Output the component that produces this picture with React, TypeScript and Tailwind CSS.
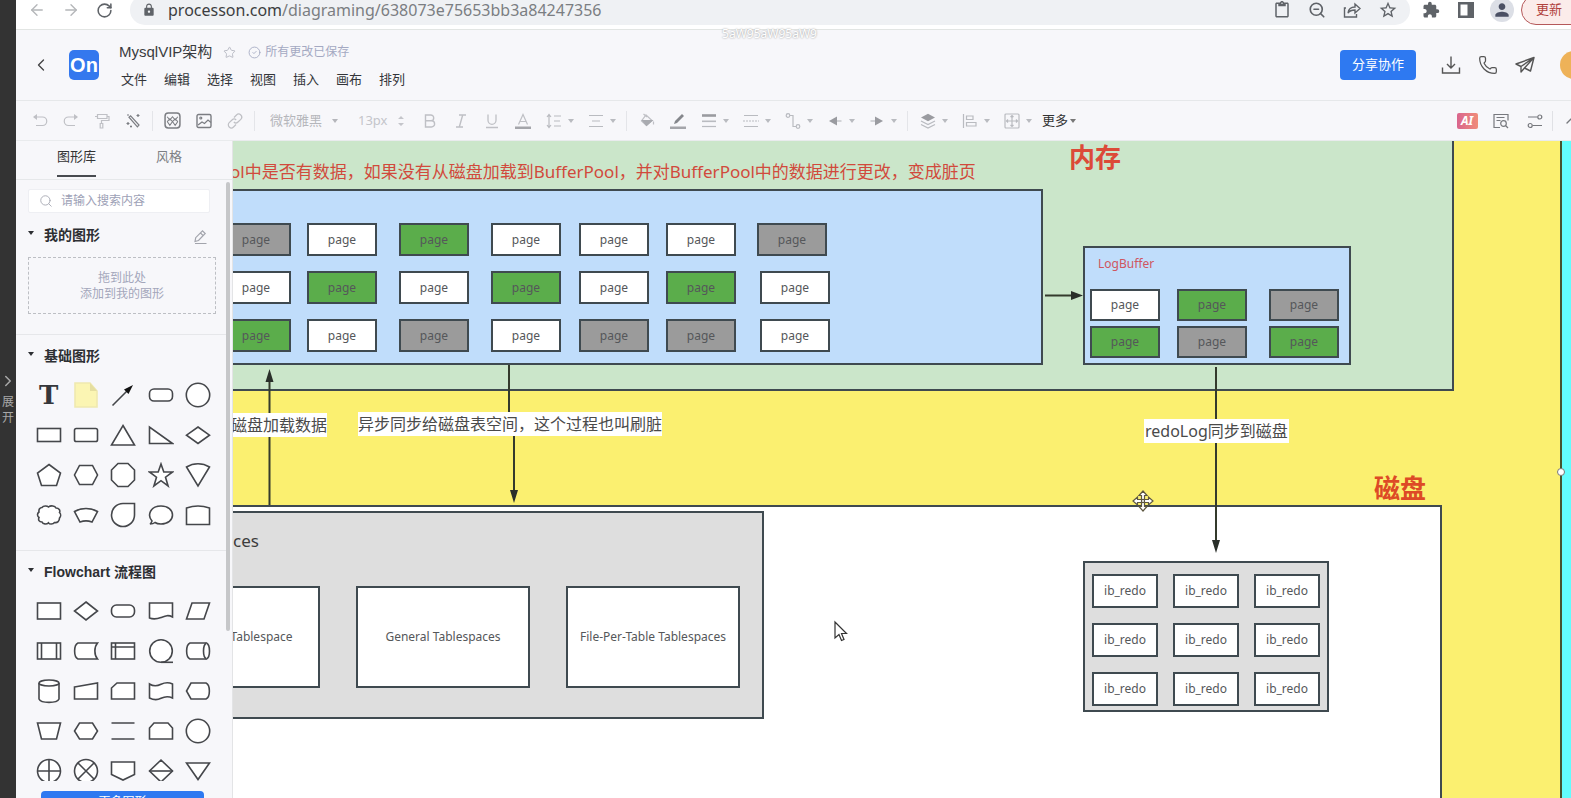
import type { ReactNode } from "react";
import { ArrowLeft, ArrowRight, RotateCw, ChevronLeft, ChevronRight, ChevronUp, Star, CircleCheck, Phone, Search, ZoomOut } from "lucide-react";
import { MdLock, MdContentPaste, MdStarOutline, MdExtension, MdPerson } from "react-icons/md";

/* ---------- shared drawing helpers ---------- */

function Glyph({ children, size = "size-4" }: { children: ReactNode; size?: string }) {
  return (
    <svg viewBox="0 0 16 16" className={size} fill="none" stroke="currentColor" strokeWidth="1.2" aria-hidden="true">
      {children}
    </svg>
  );
}

function Caret({ className = "" }: { className?: string }) {
  return (
    <svg viewBox="0 0 6 4" className={`h-1 w-1.5 shrink-0 ${className}`} fill="currentColor" aria-hidden="true">
      <path d="M0 0h6L3 4z" />
    </svg>
  );
}

/* ---------- browser bar ---------- */

function BrowserBar() {
  return (
    <div className="flex h-[30px] shrink-0 items-end overflow-hidden border-b border-[#e2e5e3] bg-white pb-1 text-[#5f6368]">
      <div className="flex h-[30px] items-center">
        <button aria-label="后退" className="ml-3 mr-4 text-[#b4b6b9]"><ArrowLeft size={18} strokeWidth={1.8} /></button>
        <button aria-label="前进" className="mr-4 text-[#b4b6b9]"><ArrowRight size={18} strokeWidth={1.8} /></button>
        <button aria-label="刷新" className="mr-[17px]"><RotateCw size={17} strokeWidth={2.2} /></button>
      </div>
      <div className="flex h-[30px] min-w-0 flex-1 items-center rounded-full bg-[#eff1f4] pl-3">
        <MdLock size={14} className="shrink-0" />
        <div className="ml-3 flex-1 truncate text-base text-[#7b7e82]">
          <span className="text-[#3c3e41]">processon.com</span>/diagraming/638073e75653bb3a84247356
        </div>
        <div className="flex items-center gap-[17px] pr-3">
          <MdContentPaste size={18} />
          <ZoomOut size={18} strokeWidth={2.2} />
          <svg viewBox="0 0 18 18" className="size-[18px]" fill="none" stroke="currentColor" strokeWidth="1.4" aria-hidden="true">
            <path d="M3 7H1.500v9h12v-3" />
            <path d="M5 12c.5-4 3-6 7-6V3l5 4.500-5 4.500V9c-3 0-5.500.8-7 3z" />
          </svg>
          <MdStarOutline size={20} />
        </div>
      </div>
      <div className="flex h-[30px] items-center">
        <MdExtension size={18} className="ml-3 mr-[18px]" />
        <svg viewBox="0 0 16 16" className="mr-4 size-4" aria-hidden="true">
          <path d="M0 0h16v16H0zM2.500 2.500v11h7v-11z" fill="currentColor" fillRule="evenodd" />
        </svg>
        <span className="mr-[7px] flex size-6 items-center justify-center rounded-full bg-[#dcdfe6] text-[#4a5064]"><MdPerson size={20} /></span>
        <div className="w-[50px]">
          <button className="h-[30px] w-[90px] rounded-full border border-[#b5595a] bg-[#fbecea] pl-3.5 text-left text-[13px] text-[#b0413c]">更新</button>
        </div>
      </div>
    </div>
  );
}

/* ---------- document header ---------- */

const menus = ["文件", "编辑", "选择", "视图", "插入", "画布", "排列"];

function Header() {
  return (
    <header className="flex h-[71px] shrink-0 items-center overflow-hidden border-b border-[#e6e8ea] pl-[15px]">
      <button aria-label="返回" className="text-[#444]"><ChevronLeft size={20} strokeWidth={1.6} /></button>
      <div className="ml-[18px] flex size-[30px] items-center justify-center rounded-[5px] bg-[#3478ee] font-[Arial,'Liberation_Sans',sans-serif] text-xl font-bold text-white">On</div>
      <div className="ml-5 flex flex-col gap-1 pt-0.5">
        <div className="flex h-6 items-center">
          <h1 className="font-['Liberation_Sans','Noto_Sans_CJK_SC',sans-serif] text-[15px] text-[#3a3c40]">MysqlVIP架构</h1>
          <button aria-label="收藏" className="ml-[11px] text-[#b9bbc4]"><Star size={13} strokeWidth={1.8} /></button>
          <span className="ml-3 flex items-center gap-1 text-xs text-[#a4a9c2]">
            <CircleCheck size={13} strokeWidth={1.6} />所有更改已保存
          </span>
        </div>
        <nav className="flex h-6 items-center gap-[17px] pl-0.5">
          {menus.map((m) => (
            <button key={m} className="text-[13px] text-[#333539]">{m}</button>
          ))}
        </nav>
      </div>
      <button className="ml-auto h-[30px] w-[76px] shrink-0 rounded bg-[#2e79f1] text-[13px] text-white">分享协作</button>
      <div className="ml-4 flex text-[#555]">
        <button aria-label="下载" className="flex w-[37px] justify-center">
          <svg viewBox="0 0 20 20" className="size-5" fill="none" stroke="currentColor" strokeWidth="1.4" aria-hidden="true">
            <path d="M10 1.500v11M6 9l4 4 4-4M1.500 12.500V18h17v-5.500" />
          </svg>
        </button>
        <button aria-label="电话" className="flex w-[37px] justify-center"><Phone size={20} strokeWidth={1.5} /></button>
        <button aria-label="发送" className="flex w-[37px] justify-center">
          <svg viewBox="0 0 20 20" className="size-5" fill="none" stroke="currentColor" strokeWidth="1.4" strokeLinejoin="round" aria-hidden="true">
            <path d="M19 2.500 1 9l5 2.500L19 2.500 15.500 16l-6-3L19 2.500M6 11.500V17l3.500-4" />
          </svg>
        </button>
      </div>
      <div className="ml-[17px] w-[11px] shrink-0">
        <div className="size-7 rounded-full bg-[#eeb258]" />
      </div>
    </header>
  );
}

/* ---------- toolbar ---------- */

function Tool({ label, children, dark = false }: { label: string; children: ReactNode; dark?: boolean }) {
  return (
    <button aria-label={label} className={`flex w-[31px] shrink-0 items-center justify-center ${dark ? "text-[#7b7d82]" : "text-[#bfc0c5]"}`}>
      {children}
    </button>
  );
}

function DropTool({ label, children }: { label: string; children: ReactNode }) {
  return (
    <button aria-label={label} className="flex w-[42px] shrink-0 items-center gap-[6px] pl-2 text-[#b9bbc0]">
      {children}
      <Caret />
    </button>
  );
}

const Divider = () => <span className="mx-1 h-5 w-px shrink-0 bg-[#e4e5e9]" />;

function Toolbar() {
  return (
    <div className="flex h-10 shrink-0 items-center overflow-hidden border-b border-[#e9ebed] pl-2" role="toolbar">
      <Tool label="撤销"><Glyph><path d="M2 4h8.500a4 4 0 0 1 0 8.500H4" /><path d="M5 1 1 4l4 3z" fill="currentColor" stroke="none" /></Glyph></Tool>
      <Tool label="重做"><Glyph><path d="M14 4H5.500a4 4 0 0 0 0 8.500H12" /><path d="m11 1 4 3-4 3z" fill="currentColor" stroke="none" /></Glyph></Tool>
      <Tool label="格式刷"><Glyph><path d="M3.500 1.500h9.500v4H3.500zM13 3.500h2v4H7.500v3M6.200 10.500h2.600V15H6.200zM3.500 3.500H1" /></Glyph></Tool>
      <Tool label="美化" dark><Glyph><path d="m4 4.200 1.600-1.400L14 12l-1.600 1.800z" /><path d="M13 1v3M11.500 2.500h3M2 2h2M3 9v3M1.500 10.500h3M6 12.500v2M5 13.500h2" /></Glyph></Tool>
      <Divider />
      <Tool label="图形" dark>
        <Glyph size="size-[17px]"><rect x="1" y="1" width="14" height="14" rx="3" strokeWidth="1.400" /><path d="m3 4.500 2.500 3L8 4.500l2.500 3L13 4.500M3 9l2.500-2.500L8 9l2.500-2.500L13 9M3 9l2.500 3.500L8 9l2.500 3.500L13 9" strokeWidth="1" /></Glyph>
      </Tool>
      <Tool label="图片" dark><Glyph><rect x="1" y="1.500" width="14" height="13" rx="1.500" strokeWidth="1.400" /><circle cx="4.800" cy="5" r="1" /><path d="m2 12 4-3 2.500 1.500L12 7l3 2.500" /></Glyph></Tool>
      <Tool label="链接"><Glyph><path d="m7 4.500 2.500-2.500a3 3 0 0 1 4.300 4.300L11 9a3 3 0 0 1-4.200 0M9 11.500 6.500 14a3 3 0 0 1-4.300-4.300L5 7a3 3 0 0 1 4.200 0" /></Glyph></Tool>
      <Divider />
      <div className="flex w-[90px] shrink-0 items-center pl-[11px] text-[#b5b6bb]">
        <select aria-label="字体" className="w-[62px] appearance-none bg-transparent text-[13px] outline-none"><option>微软雅黑</option></select>
        <Caret />
      </div>
      <div className="flex w-[65px] shrink-0 items-center pl-[9px] text-[#c4c5ca]">
        <input aria-label="字号" defaultValue="13px" className="w-10 bg-transparent text-[13px] outline-none" />
        <svg viewBox="0 0 6 12" className="h-3 w-1.5" fill="currentColor" aria-hidden="true"><path d="M0 4h6L3 1zM0 8h6l-3 3z" /></svg>
      </div>
      <Tool label="加粗"><Glyph><path d="M3.500 2h5.300a2.900 2.900 0 0 1 0 5.800H3.500zM3.500 7.800h6a3.100 3.100 0 0 1 0 6.200h-6z" strokeWidth="1.400" /></Glyph></Tool>
      <Tool label="斜体"><Glyph><path d="M6 2h7M3 14h7M9.700 2l-3.400 12" strokeWidth="1.400" /></Glyph></Tool>
      <Tool label="下划线"><Glyph><path d="M4 1.500v5.800a4 4 0 0 0 8 0V1.500M2 14.500h12" strokeWidth="1.300" /></Glyph></Tool>
      <Tool label="文字颜色"><Glyph><path d="M3.500 11.500 8 1.500l4.500 10M5 8.500h6" /><path d="M0 13.500h16V16H0z" fill="#a4a5aa" stroke="none" /></Glyph></Tool>
      <DropTool label="行距"><Glyph><path d="M3 2v12M1 4l2-2.500L5 4M1 12l2 2.500L5 12M8 3h7M8 8h6M8 13h7" /></Glyph></DropTool>
      <DropTool label="对齐"><Glyph><path d="M1 2.500h14M4 8h8M1 13.500h14" /></Glyph></DropTool>
      <Divider />
      <Tool label="填充"><Glyph><path d="m7 2 6 5.500-5.500 5-5-4.500z" /><path d="M3.500 7.500H13l-5.500 5z" fill="#a9abb0" stroke="#a9abb0" /><path d="M14.500 8.500v3M4.500 1 8 4" /></Glyph></Tool>
      <Tool label="线条颜色"><Glyph><path d="m4 11 1-3L12 1l2 2-7 7z" fill="#85878c" stroke="none" /><path d="M0 13.500h16V16H0z" fill="#a4a5aa" stroke="none" /></Glyph></Tool>
      <DropTool label="线宽"><Glyph><path d="M1 2.500h14" strokeWidth="2.600" stroke="#9a9ba0" /><path d="M1 8.300h14" strokeWidth="1.600" /><path d="M1 13.500h14" /></Glyph></DropTool>
      <DropTool label="线型"><Glyph><path d="M1 2.500h14M1 13.500h14" /><path d="M0 8h16" strokeDasharray="2 1" /></Glyph></DropTool>
      <DropTool label="连线类型"><Glyph><circle cx="3" cy="2.500" r="1.800" /><circle cx="13" cy="13.500" r="1.800" /><path d="M4.800 2.500H8v11h3.200" /></Glyph></DropTool>
      <DropTool label="起点"><Glyph><path d="M10 3.500v9L2 8z" fill="#9a9ba0" stroke="none" /><path d="M10 8h4.500" /></Glyph></DropTool>
      <DropTool label="终点"><Glyph><path d="M6 3.500v9L14 8z" fill="#9a9ba0" stroke="none" /><path d="M1.500 8H6" /></Glyph></DropTool>
      <Divider />
      <DropTool label="图层"><Glyph><path d="m8 .8 7 3.700-7 3.700-7-3.700z" fill="#9a9ba0" stroke="none" /><path d="m1 8 7 3.500L15 8M1 11.500 8 15l7-3.500" /></Glyph></DropTool>
      <DropTool label="排列对齐"><Glyph><path d="M1.500 1v14M4.500 3h6.500v3.500H4.500zM4.500 9.500H14V13H4.500z" /></Glyph></DropTool>
      <DropTool label="分布"><Glyph><rect x="1" y="1" width="14" height="14" rx="1" /><path d="M8 2.500v11M2.500 8h11M6.500 4 8 2.500 9.500 4M6.500 12 8 13.500 9.500 12M4 6.500 2.500 8 4 9.500M12 6.500 13.500 8 12 9.500" /></Glyph></DropTool>
      <button className="flex shrink-0 items-center gap-0.5 pl-1 text-[13px] text-[#333]">更多<Caret className="text-[#777]" /></button>

      <div className="ml-auto flex shrink-0 items-center text-[#77797e]">
        <button className="flex w-[34px] justify-center">
          <span className="flex h-4 w-[21px] items-center justify-center rounded-xs bg-linear-to-r from-[#d9658d] to-[#f08c78] text-xs font-bold italic text-white">AI</span>
        </button>
        <button aria-label="查找" className="flex w-[34px] justify-center">
          <Glyph><path d="M7 14.500H1v-13h14v6M3.500 4.500h8M3.500 7.500h4" /><circle cx="10.500" cy="10.500" r="2.800" /><path d="m12.500 12.500 2.500 2.500" /></Glyph>
        </button>
        <button aria-label="设置" className="flex w-[34px] justify-center">
          <Glyph><path d="M1 4h9.500M5.500 12.500H15" /><circle cx="12.800" cy="4" r="2" /><circle cx="3.200" cy="12.500" r="2" /></Glyph>
        </button>
        <span className="h-5 w-px bg-[#e0e1e5]" />
        <button aria-label="收起" className="w-[18px] pl-2.5"><ChevronUp size={16} /></button>
      </div>
    </div>
  );
}

/* ---------- shape library ---------- */

const basicShapes: { name: string; art: ReactNode }[] = [
  { name: "便签", art: <><path d="M2 1h15l7 8v16H2z" fill="#fbf5b3" stroke="#efe9b0" /><path d="M17 1v8h7z" fill="#e5dea0" stroke="none" /></> },
  { name: "箭头", art: <><path d="M2.500 23.500 17 9" /><path d="m23 3-4.500 9-4.500-4.500z" fill="#111" stroke="none" /></> },
  { name: "圆角矩形", art: <rect x="1.500" y="7" width="23" height="12" rx="4.500" /> },
  { name: "圆形", art: <circle cx="13" cy="13" r="11.700" /> },
  { name: "矩形", art: <rect x="1.500" y="6.500" width="23" height="13" /> },
  { name: "小圆角矩形", art: <rect x="1.500" y="6.500" width="23" height="13" rx="1.800" /> },
  { name: "三角形", art: <path d="M13 3.500 24.500 23h-23z" /> },
  { name: "直角三角形", art: <path d="M1.500 5v16.500h23z" /> },
  { name: "菱形", art: <path d="m13 5 11.500 8.200L13 21.500 1.500 13.200z" /> },
  { name: "五边形", art: <path d="M13 2.500 24.500 11l-4 12.500h-15L1.500 11z" /> },
  { name: "六边形", art: <path d="M6.500 3.500h13L24.500 13l-5 9.500h-13L1.500 13z" /> },
  { name: "八边形", art: <path d="M8 1.500h10L24.500 8v10L18 24.500H8L1.500 18V8z" /> },
  { name: "五角星", art: <path d="m13 2 2.800 8h8.700l-7 5.200 2.600 8.800-7.100-5.300L5.900 24l2.600-8.800L1.500 10h8.700z" /> },
  { name: "扇形", art: <path d="M1.500 5c7-4.300 16-4.300 23 0L13 24z" /> },
  { name: "云", art: <path d="M6 5.500C7.500 3.500 11 3.500 12.500 5 15 3 19 4 20 6c3 0 4.500 2.500 3.500 4.500 1.500 1.500 1.500 4 0 5.500 0 3-2 5-5 4.500-1.500 2-5 2-6 .3-2 1.700-5.500 1.500-6.500-.8-3 0-4-2-3-4.500-2-1.500-2-4 0-5.500C2.500 7.500 4 5.500 6 5.500z" /> },
  { name: "弧带", art: <path d="M1.500 9.500c7-4 16-4 23 0L19 20c-4-1.500-8-1.500-12 0z" /> },
  { name: "水滴", art: <path d="M24.500 1.500V13A11.500 11.500 0 1 1 13 1.500z" /> },
  { name: "对话", art: <path d="M2 22c1-.5 1.500-1.500 2-3C-1 13.500 2 4 13 4c7 0 11.500 4 11.500 9S20 22 13 22c-2.500 0-4.500-.4-6-1.500-1.500 1.200-3.500 1.500-5 1.500z" /> },
  { name: "拱门", art: <path d="M1.500 22.500V6c7-2.500 16-2.500 23 0v16.500z" /> },
];

const flowShapes: { name: string; art: ReactNode }[] = [
  { name: "流程", art: <rect x="1.500" y="5" width="23" height="16" /> },
  { name: "判定", art: <path d="m13 4 11.500 9L13 22 1.500 13z" /> },
  { name: "开始结束", art: <rect x="1.500" y="7" width="23" height="12" rx="5" /> },
  { name: "文档", art: <path d="M1.500 5h23v14c-4.500-2.500-7.500-1-11.500.5s-8 1.800-11.500.5z" /> },
  { name: "数据", art: <path d="M7 5h17.500L19 21H1.500z" /> },
  { name: "子流程", art: <><rect x="1.500" y="5" width="23" height="16" /><path d="M5.500 5v16M20.500 5v16" /></> },
  { name: "外部数据", art: <path d="M24.500 5H5C.5 7 .5 19 5 21h19.500c-3.500-4-3.500-12 0-16z" /> },
  { name: "内部存储", art: <><rect x="1.500" y="5" width="23" height="16" /><path d="M1.500 9h23M5.500 5v16" /></> },
  { name: "队列数据", art: <><circle cx="13" cy="13" r="11.300" /><path d="M13 24.300h12" /></> },
  { name: "直接数据", art: <><path d="M5 5h16.500c4 2 4 14 0 16H5C.5 19 .5 7 5 5z" /><path d="M21.500 5c-4 2-4 14 0 16" /></> },
  { name: "数据库", art: <><path d="M3 5v16c2 4.500 18 4.500 20 0V5" /><ellipse cx="13" cy="5" rx="10" ry="3" /></> },
  { name: "人工输入", art: <path d="M1.500 9 24.500 5v16h-23z" /> },
  { name: "卡片", art: <path d="M7 5h17.500v16h-23V10z" /> },
  { name: "条带", art: <path d="M1.500 6c4 2.500 8 2 11.500.3S20.500 4 24.500 6v14c-4-2-8-1.500-11.500.3S5.500 22 1.500 20z" /> },
  { name: "展示", art: <path d="M6 5h15c4.500 2 4.500 14 0 16H6l-4.500-8z" /> },
  { name: "人工操作", art: <path d="M1.500 5h23L20.500 21h-15z" /> },
  { name: "准备", art: <path d="M6.500 5h13l5 8-5 8h-13l-5-8z" /> },
  { name: "并行", art: <path d="M1.500 5h23M1.500 21h23" fill="none" /> },
  { name: "循环上限", art: <path d="M6 5h14l4.500 5v11h-23V10z" /> },
  { name: "页面内引用", art: <circle cx="13" cy="13" r="11.700" /> },
  { name: "或者", art: <><circle cx="13" cy="13" r="11.500" /><path d="M13 1.500v23M1.500 13h23" /></> },
  { name: "汇总", art: <><circle cx="13" cy="13" r="11.500" /><path d="m5 5 16 16M21 5 5 21" /></> },
  { name: "跨页引用", art: <path d="M1.500 4h23v12.500L13 22 1.500 16.500z" /> },
  { name: "排序", art: <><path d="m13 2 11.500 11L13 24 1.500 13z" /><path d="M1.500 13h23" /></> },
  { name: "合并", art: <path d="M1.500 5h23L13 21.500z" /> },
];

function ShapeButton({ name, children }: { name: string; children: ReactNode }) {
  return (
    <button aria-label={name} className="flex h-10 items-center justify-center">
      <svg viewBox="0 0 26 26" className="size-[26px]" fill="#fff" stroke="#45474b" strokeWidth="1.600" aria-hidden="true">{children}</svg>
    </button>
  );
}

function SectionTitle({ children }: { children: ReactNode }) {
  return (
    <button className="flex items-center gap-2.5 text-sm font-bold text-[#2d2f33]">
      <Caret className="mb-1" />
      {children}
    </button>
  );
}

function Sidebar() {
  return (
    <aside className="flex w-[217px] shrink-0 flex-col border-r border-[#e3e4e6]">
      <div className="flex h-[39px] shrink-0 border-b border-[#e6e8ea] pl-[41px] text-[13px]">
        <button className="flex h-[36px] items-start border-b-2 border-[#484b50] pt-1.5 text-[#333]">图形库</button>
        <button className="ml-[60px] flex h-[36px] items-start pt-1.5 text-[#7d7f84]">风格</button>
      </div>
      <div className="flex min-h-0 flex-1 overflow-hidden">
        <div className="flex min-w-0 flex-1 flex-col">
          <label className="ml-3 mr-4 mt-[9px] flex h-6 shrink-0 items-center gap-2 rounded-xs border border-[#eeeff3] bg-white pl-2.5">
            <Search size={14} strokeWidth={1.6} className="text-[#a9abb5]" />
            <input aria-label="搜索" placeholder="请输入搜索内容" className="w-32 bg-transparent text-xs outline-none placeholder:text-[#9da1b6]" />
          </label>
          <div className="flex h-11 shrink-0 items-center justify-between pl-3 pr-[18px]">
            <SectionTitle>我的图形</SectionTitle>
            <button aria-label="编辑" className="pt-1 text-[#a2a4ac]"><Glyph><path d="m3 12.500.7-3.800L10.500 1.800 13.200 4.500 6.500 11.500zM8.500 4l2.700 2.700M3 14.500h11.500" /></Glyph></button>
          </div>
          <div className="ml-3 mr-2.5 flex h-[57px] shrink-0 flex-col items-center justify-center border border-dashed border-[#bdbfc4] text-xs leading-4 text-[#a3a6bb]">
            <span>拖到此处</span>
            <span>添加到我的图形</span>
          </div>
          <div className="mt-5 flex h-[41px] shrink-0 items-center border-t border-[#e6e7ea] pl-3 pt-0.5"><SectionTitle>基础图形</SectionTitle></div>
          <div className="grid shrink-0 grid-cols-5 pl-3.5 pr-[9px]">
            <button aria-label="文本" className="flex h-10 items-center justify-center font-['DejaVu_Serif',serif] text-[26px] font-bold leading-none text-[#35373b]">T</button>
            {basicShapes.map((s) => <ShapeButton key={s.name} name={s.name}>{s.art}</ShapeButton>)}
          </div>
          <div className="mt-[15px] flex h-[41px] shrink-0 items-center border-t border-[#e6e7ea] pl-3 pt-0.5"><SectionTitle><span className="font-['Liberation_Sans','Noto_Sans_CJK_SC',sans-serif]">Flowchart 流程图</span></SectionTitle></div>
          <div className="grid shrink-0 grid-cols-5 pl-3.5 pr-[9px]">
            {flowShapes.map((s) => <ShapeButton key={s.name} name={s.name}>{s.art}</ShapeButton>)}
          </div>
        </div>
        <div className="w-1.5 shrink-0 pr-0.5 pt-0.5"><div className="h-3/4 w-1 rounded-full bg-[#c6c7c9]" /></div>
      </div>
      <div className="h-[17px] shrink-0 overflow-hidden pl-[25px] pr-7 pt-[7px]">
        <button className="h-[22px] w-full rounded bg-[#2e79f1] text-xs text-white">更多图形</button>
      </div>
    </aside>
  );
}

/* ---------- diagram canvas ---------- */

type Fill = "white" | "green" | "gray" | "blue" | "mint" | "silver";
type Node = { x: number; y: number; w: number; h: number; fill: Fill; text?: string };

const fills: Record<Fill, string> = {
  white: "bg-white",
  green: "bg-[#5bad4b]",
  gray: "bg-[#9b9b9b]",
  blue: "bg-[#c0ddfb]",
  mint: "bg-[#cbe6ca]",
  silver: "bg-[#dedede]",
};

const areas: Node[] = [
  { x: -20, y: -20, w: 1241, h: 270, fill: "mint" },
  { x: -20, y: 48, w: 830, h: 176, fill: "blue" },
  { x: 850, y: 105, w: 268, h: 119, fill: "blue" },
  { x: -20, y: 364, w: 1229, h: 500, fill: "white" },
  { x: -20, y: 370, w: 551, h: 208, fill: "silver" },
  { x: 850, y: 420, w: 246, h: 151, fill: "silver" },
];

const columns = [-12, 74, 166, 258, 346, 433, 524];
const rows: Fill[][] = [
  ["gray", "white", "green", "white", "white", "white", "gray"],
  ["white", "green", "white", "green", "white", "green", "white"],
  ["green", "white", "gray", "white", "gray", "gray", "white"],
];
const pages: Node[] = rows.flatMap((row, r) =>
  row.map((fill, c) => ({ x: columns[c] + (r > 0 && c === 6 ? 3 : 0), y: 82 + r * 48, w: 70, h: 33, fill, text: "page" })),
);

const logColumns = [857, 944, 1036];
const logRows: Fill[][] = [["white", "green", "gray"], ["green", "gray", "green"]];
const logPages: Node[] = logRows.flatMap((row, r) =>
  row.map((fill, c) => ({ x: logColumns[c], y: 148 + r * 37, w: 70, h: 32, fill, text: "page" })),
);

const redoFiles: Node[] = [0, 1, 2].flatMap((r) =>
  [0, 1, 2].map((c) => ({ x: 859 + c * 81, y: 433 + r * 49, w: 66, h: 34, fill: "white" as Fill, text: "ib_redo" })),
);

const tablespaces: Node[] = [
  { x: -30, y: 445, w: 117, h: 102, fill: "white", text: "Tablespace" },
  { x: 123, y: 445, w: 174, h: 102, fill: "white", text: "General Tablespaces" },
  { x: 333, y: 445, w: 174, h: 102, fill: "white", text: "File-Per-Table Tablespaces" },
];

function Box({ x, y, w, h, fill, text }: Node) {
  return (
    <div
      className={`absolute flex items-center justify-center whitespace-nowrap border-2 border-[#3f4a50] text-xs text-[#55575a] ${fills[fill]}`}
      style={{ left: x, top: y, width: w, height: h }}
    >
      {text}
    </div>
  );
}

function Canvas() {
  return (
    <main className="relative min-w-0 flex-1 overflow-hidden bg-[#62fdfd]">
      <div className="absolute inset-y-0 left-0 w-[1329px] border-r-2 border-[#47532f] bg-[#fbf070]" />
      {[...areas, ...pages, ...logPages, ...redoFiles, ...tablespaces].map((n, i) => <Box key={i} {...n} />)}

      <svg className="absolute left-0 top-0 h-[657px] w-[1338px]" viewBox="0 0 1338 657" aria-hidden="true">
        <g fill="none" stroke="#343a2c" strokeWidth="2">
          <path d="M36.500 364V236M276 224v52M281 294v60M983 226v176M812 154.500h30" />
        </g>
        <g fill="#2a2f2a">
          <path d="M36.500 228 32.500 241h8zM281 362l-4-13h8zM983 412l-4-13h8zM850 154.500 838 150v9z" />
        </g>
        <circle cx="1328" cy="331" r="3.500" fill="#fff" stroke="#777" />
        <path d="M602 481v16l4-3.500 2.500 6 2.500-1-2.500-6h5z" fill="#fff" stroke="#333" strokeWidth="1.200" />
        <g transform="translate(910 360)" fill="#fff" stroke="#5d5740" strokeWidth="1.200">
          <path d="m0-10 4 4.500H1.500v4h4V-4L10 0 5.500 4V1.500h-4v4H4L0 10l-4-4.500h2.500v-4h-4V4L-10 0l4.500-4v2.500h4v-4H-4z" />
          <circle r="1.600" />
        </g>
      </svg>

      <p className="absolute left-[-3px] top-[19px] whitespace-nowrap text-[17px] leading-6 text-[#d14a3c]">ol中是否有数据，如果没有从磁盘加载到BufferPool，并对BufferPool中的数据进行更改，变成脏页</p>
      <h2 className="absolute left-[836px] top-0 text-[26px] font-bold leading-8 text-[#dc4a38]">内存</h2>
      <h2 className="absolute left-[1141px] top-[331px] text-[26px] font-bold leading-8 text-[#dd4a26]">磁盘</h2>
      <p className="absolute left-[865px] top-[115px] text-xs leading-4 text-[#cf5560]">LogBuffer</p>
      <p className="absolute left-0 top-[388px] text-[17px] leading-6 text-[#3c3c3c]">ces</p>
      <p className="absolute left-[-2px] top-[272px] whitespace-nowrap bg-white text-base leading-6 text-[#4a4a4a]">磁盘加载数据</p>
      <p className="absolute left-[125px] top-[271px] whitespace-nowrap bg-white text-base leading-6 text-[#4a4a4a]">异步同步给磁盘表空间，这个过程也叫刷脏</p>
      <p className="absolute left-[911px] top-[278px] whitespace-nowrap bg-white px-px text-base leading-6 text-[#4a4a4a]">redoLog同步到磁盘</p>
    </main>
  );
}

export default function App() {
  return (
    <div className="relative flex h-screen overflow-hidden bg-[#f7f7fa] font-['Noto_Sans','Noto_Sans_CJK_SC',sans-serif]">
      <button className="flex w-4 shrink-0 flex-col items-center justify-center bg-[#333] text-xs leading-4 text-[#a8a8a8]">
        <ChevronRight size={18} strokeWidth={2} className="mb-1 shrink-0" />
        <span>展</span>
        <span>开</span>
      </button>
      <div className="flex min-w-0 flex-1 flex-col">
        <BrowserBar />
        <Header />
        <Toolbar />
        <div className="flex min-h-0 flex-1">
          <Sidebar />
          <Canvas />
        </div>
      </div>
      <div className="pointer-events-none absolute inset-x-0 top-[26px] pr-8 text-center text-xs leading-4 text-white [text-shadow:0_0_2px_#888]">5aW95aW95aW9</div>
    </div>
  );
}
